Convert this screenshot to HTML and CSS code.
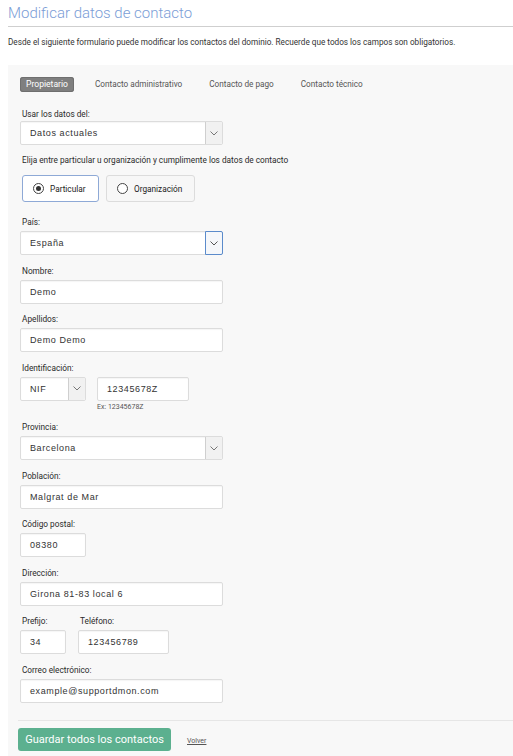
FILE: index.html
```html
<!DOCTYPE html>
<html lang="es">
<head>
<meta charset="utf-8">
<title>Modificar datos de contacto</title>
<link rel="stylesheet" href="styles.css">
</head>
<body>
<div class="page">
  <h1 class="title">Modificar datos de contacto</h1>
  <p class="desc">Desde el siguiente formulario puede modificar los contactos del dominio. Recuerde que todos los campos son obligatorios.</p>

  <div class="panel">
    <div class="tabs">
      <span class="tab active">Propietario</span>
      <span class="tab">Contacto administrativo</span>
      <span class="tab">Contacto de pago</span>
      <span class="tab">Contacto técnico</span>
    </div>

    <div class="field first">
      <div class="label">Usar los datos del:</div>
      <div class="select w-full">
        <span class="value">Datos actuales</span>
        <span class="arrow"><svg width="8" height="5" viewBox="0 0 8 5"><polyline points="0.5,0.5 4,4 7.5,0.5" fill="none" stroke="#777" stroke-width="1"/></svg></span>
      </div>
    </div>

    <div class="field choose">
      <div class="label">Elija entre particular u organización y cumplimente los datos de contacto</div>
      <div class="radios">
        <div class="radio selected"><span class="circle"><span class="dot"></span></span><span>Particular</span></div>
        <div class="radio"><span class="circle"></span><span>Organización</span></div>
      </div>
    </div>

    <div class="field pais">
      <div class="label">País:</div>
      <div class="select w-full focus">
        <span class="value">España</span>
        <span class="arrow"><svg width="8" height="5" viewBox="0 0 8 5"><polyline points="0.5,0.5 4,4 7.5,0.5" fill="none" stroke="#555" stroke-width="1"/></svg></span>
      </div>
    </div>

    <div class="field">
      <div class="label">Nombre:</div>
      <div class="input w-full">Demo</div>
    </div>

    <div class="field">
      <div class="label">Apellidos:</div>
      <div class="input w-full">Demo Demo</div>
    </div>

    <div class="field">
      <div class="label">Identificación:</div>
      <div class="row">
        <div class="select w-nif">
          <span class="value">NIF</span>
          <span class="arrow"><svg width="8" height="5" viewBox="0 0 8 5"><polyline points="0.5,0.5 4,4 7.5,0.5" fill="none" stroke="#777" stroke-width="1"/></svg></span>
        </div>
        <div class="col">
          <div class="input w-id">12345678Z</div>
          <div class="hint">Ex: 12345678Z</div>
        </div>
      </div>
    </div>

    <div class="field">
      <div class="label">Provincia:</div>
      <div class="select w-full">
        <span class="value">Barcelona</span>
        <span class="arrow"><svg width="8" height="5" viewBox="0 0 8 5"><polyline points="0.5,0.5 4,4 7.5,0.5" fill="none" stroke="#777" stroke-width="1"/></svg></span>
      </div>
    </div>

    <div class="field">
      <div class="label">Población:</div>
      <div class="input w-full">Malgrat de Mar</div>
    </div>

    <div class="field">
      <div class="label">Código postal:</div>
      <div class="input w-cp">08380</div>
    </div>

    <div class="field">
      <div class="label">Dirección:</div>
      <div class="input w-full">Girona 81-83 local 6</div>
    </div>

    <div class="field">
      <div class="row phone">
        <div class="col">
          <div class="label">Prefijo:</div>
          <div class="input w-pre">34</div>
        </div>
        <div class="col">
          <div class="label">Teléfono:</div>
          <div class="input w-tel">123456789</div>
        </div>
      </div>
    </div>

    <div class="field">
      <div class="label">Correo electrónico:</div>
      <div class="input w-full">example@supportdmon.com</div>
    </div>

    <div class="actions">
      <button class="btn" type="button">Guardar todos los contactos</button>
      <a class="back" href="#">Volver</a>
    </div>
  </div>
</div>
</body>
</html>
```
FILE: styles.css
```css
html, body {
  margin: 0;
  padding: 0;
  background: #ffffff;
}

body {
  font-family: Roboto, "Liberation Sans", Arial, sans-serif;
  color: #222;
  overflow: hidden;
}

.page {
  padding-left: 8px;
}

.title {
  margin: 0;
  padding-top: 3px;
  padding-bottom: 3px;
  font-size: 15px;
  line-height: 20px;
  font-weight: 300;
  color: #7b9dd6;
  border-bottom: 1px solid #cfcfcf;
}

.desc {
  margin: 10px 0 0;
  font-size: 8.2px;
  line-height: 10px;
  color: #333;
}

.panel {
  margin-top: 18px;
  background: #f8f8f8;
  padding: 12px 0 6px 12px;
}

.tabs {
  display: flex;
  gap: 15px;
  height: 15px;
  align-items: center;
}

.tab {
  padding: 0 6px;
  font-size: 8.2px;
  line-height: 15px;
  color: #555;
}

.tab.active {
  font-size: 8.6px;
  background: #7f7f7f;
  color: #fff;
  border-radius: 3px;
  box-shadow: 0 0 0 1px #6f6f6f inset;
}

.field {
  margin-top: 10.5px;
}

.field.first {
  margin-top: 17px;
}

.field.choose {
  margin-top: 10px;
}

.field.pais {
  margin-top: 15px;
}

.label {
  font-size: 8.25px;
  line-height: 10px;
  margin-bottom: 4px;
  padding-left: 2px;
  color: #2a2a2a;
}

.field.first .label {
  margin-bottom: 2px;
}

.field.choose .label {
  margin-bottom: 10px;
}

.input, .select {
  box-sizing: border-box;
  height: 24px;
  background: #fff;
  border: 1px solid #dcdcdc;
  border-radius: 2px;
  box-shadow: inset 0 1px 1px rgba(0, 0, 0, 0.04);
  font-family: "Liberation Sans", Arial, sans-serif;
  font-size: 9px;
  letter-spacing: 0.6px;
  color: #333;
}

.input {
  padding-left: 9px;
  line-height: 22px;
}

.select {
  display: flex;
  align-items: stretch;
}

.select .value {
  flex: 1;
  padding-left: 9px;
  line-height: 22px;
}

.select .arrow {
  width: 16px;
  display: flex;
  align-items: center;
  justify-content: center;
  background: #f1f1f1;
  border-left: 1px solid #cfcfcf;
  border-radius: 0 2px 2px 0;
}

.select.focus .arrow {
  border: 1px solid #5b8bcb;
  margin: -1px -1px -1px 0;
  background: #f5f7fa;
}

.w-full { width: 203px; }
.w-nif { width: 66px; }
.w-id { width: 92px; }
.w-cp { width: 66px; }
.w-pre { width: 46px; }
.w-tel { width: 91px; }

.row {
  display: flex;
  gap: 11px;
  align-items: flex-start;
}

.row.phone {
  gap: 12px;
}

.col {
  display: flex;
  flex-direction: column;
}

.hint {
  font-size: 7px;
  line-height: 9px;
  margin-top: 2px;
  color: #555;
}

.radios {
  display: flex;
  gap: 7px;
  padding-left: 2px;
}

.radio {
  box-sizing: border-box;
  height: 27px;
  display: flex;
  align-items: center;
  gap: 6px;
  padding-left: 10px;
  border: 1px solid #dcdcdc;
  border-radius: 3px;
  background: #f7f7f7;
  font-size: 8.25px;
  color: #222;
  width: 89px;
}

.radio.selected {
  width: 77px;
  background: #fff;
  border-color: #8ea9d6;
}

.circle {
  box-sizing: border-box;
  width: 11px;
  height: 11px;
  border-radius: 50%;
  border: 1px solid #444;
  background: #fff;
  display: flex;
  align-items: center;
  justify-content: center;
}

.dot {
  width: 5px;
  height: 5px;
  border-radius: 50%;
  background: #333;
}

.actions {
  margin-top: 17px;
  border-top: 1px solid #e6e6e6;
  padding-top: 7px;
  display: flex;
  align-items: center;
  gap: 16px;
  margin-left: -2px;
}

.btn {
  box-sizing: border-box;
  width: 153px;
  height: 23px;
  border: none;
  border-radius: 3px;
  background: #5cb08f;
  color: #fff;
  font-family: Roboto, "Liberation Sans", Arial, sans-serif;
  font-size: 11px;
  padding: 0;
}

.back {
  font-size: 7px;
  color: #555;
  text-decoration: underline;
  padding-top: 3px;
}
```
